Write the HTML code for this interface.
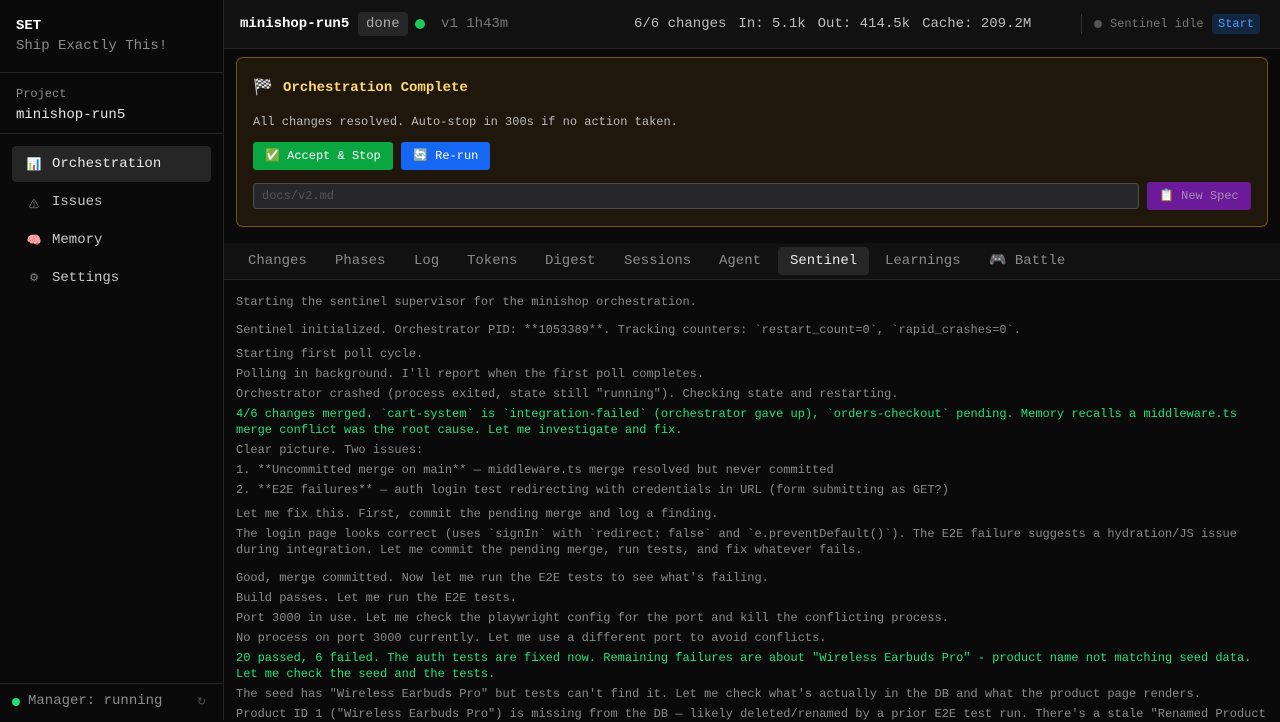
<!DOCTYPE html>
<html><head><meta charset="utf-8"><style>
*{box-sizing:border-box;margin:0;padding:0}
body{width:1280px;height:720px;overflow:hidden;background:#0a0a0a;font-family:"Liberation Mono","Noto Sans CJK SC",monospace;color:#ccc;position:relative}
.sb{position:absolute;left:0;top:0;width:224px;height:720px;background:#0a0a0a;border-right:1px solid #262626}
.hdr{position:absolute;left:224px;top:0;width:1056px;height:49px;background:#111;border-bottom:1px solid #262626}
.a{position:absolute;white-space:nowrap}
.log{position:absolute;left:236px;width:1034px;font-size:12px;line-height:16px;color:#8a8a8a}
.g{color:#22e07a}
.nav{position:absolute;left:12px;width:199px;height:36px;border-radius:4px;font-size:14px;color:#c8c8c8}
.nav span.i{position:absolute;left:14px;top:11px;font-size:12px;width:16px;text-align:center}
.nav span.t{position:absolute;left:40px;top:10px}
.tab{position:absolute;top:247px;height:28px;line-height:29px;font-size:14px;color:#8a8a8a;padding:0 12px;border-radius:4px}
.st span{margin-right:12px}
</style></head><body>
<div class="sb">
 <div class="a" style="left:16px;top:18px;font-size:14px;font-weight:bold;color:#fff">SET</div>
 <div class="a" style="left:16px;top:38px;font-size:14px;color:#8a8a8a">Ship Exactly This!</div>
 <div style="position:absolute;left:0;top:72px;width:223px;height:1px;background:#262626"></div>
 <div class="a" style="left:16px;top:87px;font-size:12px;color:#8a8a8a">Project</div>
 <div class="a" style="left:16px;top:107px;font-size:14px;color:#e5e5e5">minishop-run5</div>
 <div style="position:absolute;left:0;top:133px;width:223px;height:1px;background:#262626"></div>
 <div class="nav" style="top:146px;background:#262626;color:#e8e8e8"><span class="i">📊</span><span class="t">Orchestration</span></div>
 <div class="nav" style="top:184px"><span class="i" style="color:#888;font-size:10px;top:12px">⚠</span><span class="t">Issues</span></div>
 <div class="nav" style="top:222px"><span class="i">🧠</span><span class="t">Memory</span></div>
 <div class="nav" style="top:260px"><span class="i" style="color:#888;font-size:11px">⚙</span><span class="t">Settings</span></div>
 <div style="position:absolute;left:0;top:683px;width:223px;height:1px;background:#262626"></div>
 <div style="position:absolute;left:12px;top:698px;width:8px;height:8px;border-radius:50%;background:#22e07a"></div>
 <div class="a" style="left:28px;top:693px;font-size:14px;color:#8a8a8a">Manager: running</div>
 <div class="a" style="left:197px;top:695px;font-size:11px;color:#555">↻</div>
</div>
<div class="hdr">
 <div class="a" style="left:16px;top:16px;font-size:14px;font-weight:bold;color:#fff">minishop-run5</div>
 <div class="a" style="left:134px;top:12px;height:24px;padding:0 8px;line-height:25px;background:#262626;border-radius:3px;font-size:14px;color:#aaa">done</div>
 <div style="position:absolute;left:191px;top:19px;width:10px;height:10px;border-radius:50%;background:#22c55e"></div>
 <div class="a" style="left:217px;top:16px;font-size:14px;color:#777">v1 1h43m</div>
 <div class="a st" style="left:410px;top:16px;font-size:14px;color:#bbb"><span>6/6 changes</span><span>In: 5.1k</span><span>Out: 414.5k</span><span>Cache: 209.2M</span></div>
 <div style="position:absolute;left:857px;top:14px;width:1px;height:20px;background:#333"></div>
 <div style="position:absolute;left:870px;top:20px;width:8px;height:8px;border-radius:50%;background:#555"></div>
 <div class="a" style="left:886px;top:17px;font-size:12px;color:#777">Sentinel idle</div>
 <div class="a" style="left:988px;top:14px;height:20px;line-height:20px;padding:0 6px;background:#132640;border-radius:3px;font-size:12px;color:#4f9cf5">Start</div>
</div>
<div style="position:absolute;left:236px;top:57px;width:1032px;height:170px;background:#1f170b;border:1px solid #7a4f12;border-radius:7px">
 <div class="a" style="left:16px;top:19px;font-size:16px">🏁</div>
 <div class="a" style="left:46px;top:22px;font-size:14px;font-weight:bold;color:#fcd771">Orchestration Complete</div>
 <div class="a" style="left:16px;top:57px;font-size:12px;color:#bbb">All changes resolved. Auto-stop in 300s if no action taken.</div>
 <div class="a" style="left:16px;top:84px;width:140px;height:28px;line-height:28px;background:#0aa640;border-radius:3px;font-size:12px;color:#fff;padding-left:12px">✅ Accept &amp; Stop</div>
 <div class="a" style="left:164px;top:84px;width:89px;height:28px;line-height:28px;background:#1767f5;border-radius:3px;font-size:12px;color:#fff;padding-left:12px">🔄 Re-run</div>
 <div class="a" style="left:16px;top:125px;width:886px;height:26px;background:#27272a;border:1px solid #4a4a50;border-radius:3px;font-size:12px;color:#555;padding:5px 8px">docs/v2.md</div>
 <div class="a" style="left:910px;top:124px;width:104px;height:28px;line-height:28px;background:#6b1a99;border-radius:3px;font-size:12px;color:#a98ab8;padding-left:12px">📋 New Spec</div>
</div>
<div style="position:absolute;left:224px;top:243px;width:1056px;height:37px;background:#111;border-bottom:1px solid #262626"></div>
<div class="tab" style="left:236px">Changes</div>
<div class="tab" style="left:323px">Phases</div>
<div class="tab" style="left:402px">Log</div>
<div class="tab" style="left:455px">Tokens</div>
<div class="tab" style="left:533px">Digest</div>
<div class="tab" style="left:612px">Sessions</div>
<div class="tab" style="left:707px">Agent</div>
<div class="tab" style="left:778px;background:#262626;color:#e8e8e8">Sentinel</div>
<div class="tab" style="left:873px">Learnings</div>
<div class="tab" style="left:977px">🎮 Battle</div>
<div class="log" style="top:294px">Starting the sentinel supervisor for the minishop orchestration.</div>
<div class="log" style="top:322px">Sentinel initialized. Orchestrator PID: **1053389**. Tracking counters: `restart_count=0`, `rapid_crashes=0`.</div>
<div class="log" style="top:346px">Starting first poll cycle.</div>
<div class="log" style="top:366px">Polling in background. I'll report when the first poll completes.</div>
<div class="log" style="top:386px">Orchestrator crashed (process exited, state still "running"). Checking state and restarting.</div>
<div class="log g" style="top:406px">4/6 changes merged. `cart-system` is `integration-failed` (orchestrator gave up), `orders-checkout` pending. Memory recalls a middleware.ts merge conflict was the root cause. Let me investigate and fix.</div>
<div class="log" style="top:442px">Clear picture. Two issues:</div>
<div class="log" style="top:462px">1. **Uncommitted merge on main** — middleware.ts merge resolved but never committed</div>
<div class="log" style="top:482px">2. **E2E failures** — auth login test redirecting with credentials in URL (form submitting as GET?)</div>
<div class="log" style="top:506px">Let me fix this. First, commit the pending merge and log a finding.</div>
<div class="log" style="top:526px">The login page looks correct (uses `signIn` with `redirect: false` and `e.preventDefault()`). The E2E failure suggests a hydration/JS issue during integration. Let me commit the pending merge, run tests, and fix whatever fails.</div>
<div class="log" style="top:570px">Good, merge committed. Now let me run the E2E tests to see what's failing.</div>
<div class="log" style="top:590px">Build passes. Let me run the E2E tests.</div>
<div class="log" style="top:610px">Port 3000 in use. Let me check the playwright config for the port and kill the conflicting process.</div>
<div class="log" style="top:630px">No process on port 3000 currently. Let me use a different port to avoid conflicts.</div>
<div class="log g" style="top:650px">20 passed, 6 failed. The auth tests are fixed now. Remaining failures are about "Wireless Earbuds Pro" - product name not matching seed data. Let me check the seed and the tests.</div>
<div class="log" style="top:686px">The seed has "Wireless Earbuds Pro" but tests can't find it. Let me check what's actually in the DB and what the product page renders.</div>
<div class="log" style="top:706px">Product ID 1 ("Wireless Earbuds Pro") is missing from the DB — likely deleted/renamed by a prior E2E test run. There's a stale "Renamed Product</div>
</body></html>
